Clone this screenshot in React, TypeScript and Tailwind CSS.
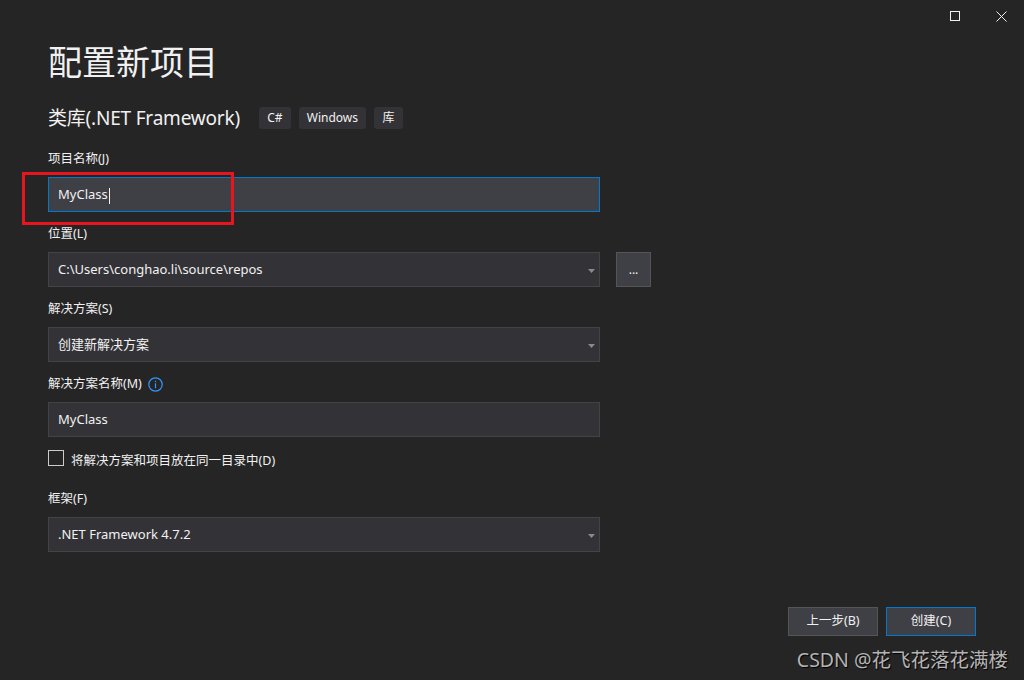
const font = "font-['Segoe_UI','Noto_Sans','Noto_Sans_CJK_SC',sans-serif]";

function Caret() {
  return (
    <svg width="7" height="4" viewBox="0 0 7 4" className="absolute right-[4px] top-[16px]">
      <path d="M0 0h7L3.5 4z" fill="#8a8a8a" />
    </svg>
  );
}

function Field({ value, dropdown, focused }: { value: string; dropdown?: boolean; focused?: boolean }) {
  return (
    <div
      className={
        focused
          ? "relative h-[35px] w-[552px] border border-[#007acc] bg-[#3f3f46] pl-[9px] text-[13px] leading-[33px] text-[#f1f1f1]"
          : "relative h-[35px] w-[552px] border border-[#434346] bg-[#333337] pl-[9px] text-[13px] leading-[33px] text-[#f1f1f1]"
      }
    >
      {value}
      {focused && <span className="ml-[1px] inline-block h-[16px] w-px bg-[#f1f1f1] align-middle" />}
      {dropdown && <Caret />}
    </div>
  );
}

function Label({ children }: { children: React.ReactNode }) {
  return <div className="h-[18px] text-[12.5px] leading-[18px] text-[#f1f1f1]">{children}</div>;
}

export default function App() {
  return (
    <div className={`relative h-[680px] w-full overflow-hidden bg-[#252526] ${font}`}>
      <div className="flex h-8 justify-end">
        <div className="flex w-[46px] items-center justify-center">
          <div className="h-[10px] w-[10px] border border-[#f1f1f1]" />
        </div>
        <div className="flex w-[46px] items-center justify-center">
          <svg width="11" height="11" viewBox="0 0 11 11">
            <path d="M0.5 0.5l10 10M10.5 0.5l-10 10" stroke="#f1f1f1" strokeWidth="1" />
          </svg>
        </div>
      </div>

      <div className="px-12">
        <h1 className="mt-[10px] text-[34px] leading-[40px] text-[#f1f1f1]">配置新项目</h1>

        <div className="mt-[22px] flex items-center">
          <span className="text-[19px] leading-[28px] tracking-[-0.2px] text-[#f1f1f1]">类库(.NET Framework)</span>
          <div className="ml-[19px] flex gap-2">
            <span className="flex h-[22px] w-[32px] items-center justify-center rounded-[3px] bg-[#333337] text-[12px] text-[#f1f1f1]">C#</span>
            <span className="flex h-[22px] w-[67px] items-center justify-center rounded-[3px] bg-[#333337] text-[12px] text-[#f1f1f1]">Windows</span>
            <span className="flex h-[22px] w-[29px] items-center justify-center rounded-[3px] bg-[#333337] text-[12px] text-[#f1f1f1]">库</span>
          </div>
        </div>

        <div className="mt-[18px]">
          <Label>项目名称(J)</Label>
          <div className="mt-[9px]">
            <Field value="MyClass" focused />
          </div>
        </div>

        <div className="mt-[13px]">
          <Label>位置(L)</Label>
          <div className="mt-[9px] flex gap-4">
            <Field value="C:\Users\conghao.li\source\repos" dropdown />
            <div className="flex h-[35px] w-[35px] items-center justify-center border border-[#555555] bg-[#3f3f46] text-[12px] leading-none text-[#f1f1f1]">
              ...
            </div>
          </div>
        </div>

        <div className="mt-[13px]">
          <Label>解决方案(S)</Label>
          <div className="mt-[9px]">
            <Field value="创建新解决方案" dropdown />
          </div>
        </div>

        <div className="mt-[13px]">
          <div className="flex items-center gap-[6px]">
            <Label>解决方案名称(M)</Label>
            <svg width="15" height="15" viewBox="0 0 15 15">
              <circle cx="7.5" cy="7.5" r="6.7" fill="none" stroke="#3794ff" strokeWidth="1.2" />
              <rect x="6.9" y="6.3" width="1.2" height="5" fill="#3794ff" />
              <rect x="6.9" y="3.8" width="1.2" height="1.3" fill="#3794ff" />
            </svg>
          </div>
          <div className="mt-[9px]">
            <Field value="MyClass" />
          </div>
        </div>

        <div className="mt-[13px] flex items-start gap-[7px]">
          <div className="h-[16px] w-[16px] border border-[#cccccc]" />
          <span className="mt-[2px] text-[12.5px] leading-[18px] text-[#f1f1f1]">将解决方案和项目放在同一目录中(D)</span>
        </div>

        <div className="mt-[20px]">
          <Label>框架(F)</Label>
          <div className="mt-[9px]">
            <Field value=".NET Framework 4.7.2" dropdown />
          </div>
        </div>
      </div>

      <div className="mt-[55px] flex justify-end gap-2 pr-12">
        <div className="flex h-[29px] w-[90px] items-center justify-center border border-[#555555] bg-[#3f3f46] text-[12.5px] text-[#f1f1f1]">
          上一步(B)
        </div>
        <div className="flex h-[29px] w-[90px] items-center justify-center border border-[#007acc] bg-[#3f3f46] text-[12.5px] text-[#f1f1f1]">
          创建(C)
        </div>
      </div>

      <div className="absolute left-[22px] top-[172px] h-[53px] w-[212px] border-[3px] border-[#e8141e]" />

      <div className="absolute right-[16px] top-[646px] text-[19.5px] leading-[28px] text-[#b4b4b4] [text-shadow:1px_1px_1px_#000]">
        CSDN @花飞花落花满楼
      </div>
    </div>
  );
}
